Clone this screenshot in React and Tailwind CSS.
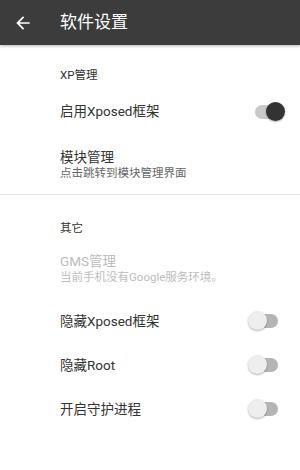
const font = { fontFamily: "Roboto, 'Noto Sans CJK SC', sans-serif" };

function Toggle({ on }) {
  return (
    <div className="relative h-[20px] w-[37px]">
      <div
        className={
          "absolute left-[7px] top-[3px] h-[14px] w-[23px] rounded-full " +
          (on ? "bg-[#c9c9c9]" : "bg-[#b5b5b5]")
        }
      />
      <div
        className={
          "absolute top-0 h-[19px] w-[19px] rounded-full shadow-[0_1px_2px_rgba(0,0,0,0.3)] " +
          (on ? "left-[18px] bg-[#333333]" : "left-0 bg-[#eeeeee]")
        }
      />
    </div>
  );
}

function Category({ title, className }) {
  return (
    <div className={"flex items-end pl-[60px] text-[11.5px] leading-[16px] text-[#333] " + className}>
      {title}
    </div>
  );
}

function SwitchRow({ title, on }) {
  return (
    <div className="flex h-[44px] items-center justify-between pl-[60px] pr-[15px]">
      <span className="text-[13.5px] text-[#333]">{title}</span>
      <Toggle on={on} />
    </div>
  );
}

export default function App() {
  return (
    <div className="h-[470px] w-[300px] overflow-hidden bg-white" style={font}>
      <header className="flex h-[45px] items-center bg-[#3c3c3c] text-white shadow-[0_1px_3px_rgba(0,0,0,0.3)]">
        <svg className="ml-[13px] h-[20px] w-[20px]" viewBox="0 0 24 24" fill="currentColor">
          <path d="M20 11H7.83l5.59-5.59L12 4l-8 8 8 8 1.41-1.41L7.83 13H20v-2z" />
        </svg>
        <h1 className="ml-[27px] text-[17px] font-normal">软件设置</h1>
      </header>

      <Category title="XP管理" className="h-[43px] pb-[5px]" />
      <div className="flex h-[47px] items-center justify-between pl-[60px] pr-[15px]">
        <span className="text-[13.5px] text-[#333]">启用Xposed框架</span>
        <Toggle on />
      </div>
      <div className="flex h-[59px] flex-col justify-center pl-[60px]">
        <span className="text-[13.5px] leading-[18px] text-[#333]">模块管理</span>
        <span className="text-[11.5px] leading-[15px] text-[#666]">点击跳转到模块管理界面</span>
      </div>
      <div className="h-px bg-[#e4e4e4]" />

      <Category title="其它" className="h-[42px] pb-[1px]" />
      <div className="flex h-[62px] flex-col justify-center pl-[60px]">
        <span className="text-[13.5px] leading-[18px] text-[#bdbdbd]">GMS管理</span>
        <span className="text-[11.5px] leading-[15px] text-[#bdbdbd]">当前手机没有Google服务环境。</span>
      </div>
      <SwitchRow title="隐藏Xposed框架" />
      <SwitchRow title="隐藏Root" />
      <SwitchRow title="开启守护进程" />
    </div>
  );
}
